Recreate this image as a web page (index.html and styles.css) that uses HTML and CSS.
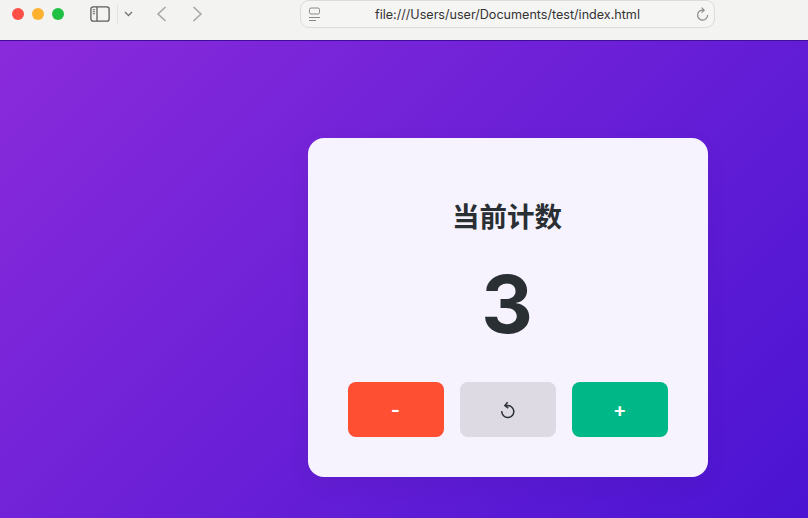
FILE: index.html
```html
<!DOCTYPE html>
<html lang="zh">
<head>
<meta charset="utf-8">
<title>计数器</title>
<link rel="stylesheet" href="styles.css">
</head>
<body>
<header class="toolbar">
  <div class="lights">
    <span class="light red"></span>
    <span class="light yellow"></span>
    <span class="light green"></span>
  </div>
  <svg class="sidebar-icon" width="20" height="16" viewBox="0 0 20 16" fill="none">
    <rect x="0.9" y="0.9" width="18.2" height="14.2" rx="2.2" stroke="#5c5c5c" stroke-width="1.3"/>
    <path d="M7 1v14" stroke="#5c5c5c" stroke-width="1.3"/>
    <path d="M2.7 3.7h2.4M2.7 5.7h2.4M2.7 7.7h2.4" stroke="#6a6a6a"/>
  </svg>
  <span class="divider"></span>
  <svg class="chevron" width="9" height="6" viewBox="0 0 9 6" fill="none"><path d="M1 1l3.5 3.5L8 1" stroke="#777" stroke-width="1.4"/></svg>
  <svg class="back" width="11" height="16" viewBox="0 0 11 16" fill="none"><path d="M9.5 1L2 8l7.5 7" stroke="#a5a5a5" stroke-width="1.5"/></svg>
  <svg class="forward" width="11" height="16" viewBox="0 0 11 16" fill="none"><path d="M1.5 1L9 8l-7.5 7" stroke="#a5a5a5" stroke-width="1.5"/></svg>
  <div class="address">
    <svg class="page-icon" width="12" height="15" viewBox="0 0 12 15" fill="none">
      <rect x="0.5" y="1" width="10" height="6" rx="1.5" stroke="#8a8a8a"/>
      <path d="M0 10.5h11M0 13.5h7" stroke="#8a8a8a"/>
    </svg>
    <span class="url">file:///Users/user/Documents/test/index.html</span>
    <svg class="reload" width="13" height="15" viewBox="0 0 13 15" fill="none">
      <path d="M7.5 3.2A5 5 0 1 0 11.6 8" stroke="#888" stroke-width="1.2"/>
      <path d="M5.6 0.6L8.2 3.2 5.6 5.6" stroke="#888" stroke-width="1.2"/>
    </svg>
  </div>
</header>
<main class="stage">
  <section class="card">
    <h1 class="title">当前计数</h1>
    <div class="count">3</div>
    <div class="actions">
      <button class="btn minus">-</button>
      <button class="btn reset">
        <svg width="16" height="18" viewBox="0 0 16 18" fill="none">
          <path d="M6.4 4.2A6 6 0 1 1 2.3 9.5" stroke="#2a2f33" stroke-width="1.5" transform="translate(0.5 0.6)"/>
          <path d="M8.6 1.2L5.9 4.6l3.4 2.6" stroke="#2a2f33" stroke-width="1.5"/>
        </svg>
      </button>
      <button class="btn plus">+</button>
    </div>
  </section>
</main>
</body>
</html>
```
FILE: styles.css
```css
* { box-sizing: border-box; }
html, body { height: 100%; }
body {
  margin: 0;
  display: flex;
  flex-direction: column;
  overflow: hidden;
  font-family: Inter, "Noto Sans CJK SC", sans-serif;
  background: #f2f2f1;
}
.toolbar {
  height: 41px;
  flex: none;
  display: flex;
  align-items: flex-start;
  background: #f3f3f2;
  border-bottom: 1px solid #3f0f9a;
}
.lights { display: flex; gap: 8px; margin: 8px 0 0 12px; }
.light { width: 12px; height: 12px; border-radius: 50%; }
.red { background: #ff5048; }
.yellow { background: #fdb12e; }
.green { background: #1fc144; }
.sidebar-icon { margin: 6px 0 0 26px; }
.divider { width: 1px; height: 19px; margin: 5px 0 0 7px; background: #e2e2e2; }
.chevron { margin: 11px 0 0 6px; }
.back { margin: 6px 0 0 23px; }
.forward { margin: 6px 0 0 25px; }
.address {
  width: 415px;
  height: 28px;
  margin: 0 0 0 97px;
  padding: 0 5px 0 8px;
  display: flex;
  align-items: center;
  background: #f5f5f4;
  border: 1px solid #dcdcdb;
  border-radius: 9px;
}
.url {
  margin-left: 54px;
  flex: 1;
  font-size: 12.58px;
  color: #333;
  white-space: nowrap;
}
.stage {
  flex: 1;
  padding: 97px 0 0 308px;
  background: linear-gradient(135deg, #8a2bdb 0%, #4a14d2 100%);
}
.card {
  width: 400px;
  height: 339px;
  padding: 60px 40px 40px;
  display: flex;
  flex-direction: column;
  background: #f6f3fe;
  border-radius: 16px;
  box-shadow: 0 8px 24px rgba(0, 0, 0, 0.05);
}
.title {
  margin: 0;
  height: 38px;
  padding-right: 2px;
  font-size: 27.5px;
  line-height: 39px;
  font-weight: 700;
  text-align: center;
  color: #2a2f33;
}
.count {
  margin-top: 19px;
  height: 97px;
  padding-right: 2px;
  font-size: 80px;
  line-height: 97px;
  font-weight: 700;
  text-align: center;
  color: #2a2f33;
}
.actions { margin-top: 30px; display: flex; gap: 16px; }
.btn {
  flex: 1;
  height: 55px;
  padding: 0 1px 0 0;
  border: 0;
  border-radius: 8px;
  font-family: inherit;
  font-size: 20px;
  font-weight: 600;
  color: #fff;
  display: flex;
  align-items: center;
  justify-content: center;
}
.minus { background: #ff4f33; }
.reset { background: #dddae3; padding-right: 2px; }
.plus { background: #00b887; }
```
